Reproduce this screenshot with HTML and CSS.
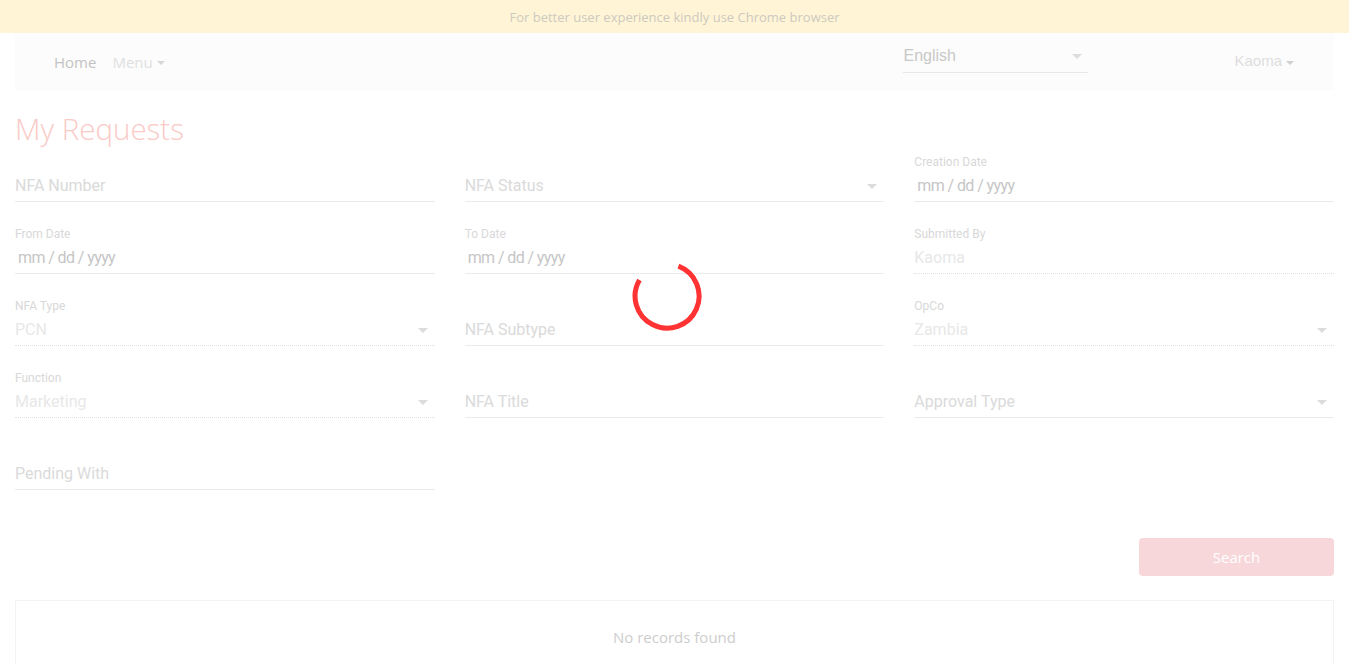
FILE: index.html
```html
<!DOCTYPE html>
<html lang="en">
<head>
<meta charset="utf-8">
<title>My Requests</title>
<link rel="stylesheet" href="styles.css">
</head>
<body>
<div class="page">
  <div class="banner">For better user experience kindly use Chrome browser</div>
  <nav class="navbar">
    <div class="nav-left">
      <span class="nav-home">Home</span>
      <span class="nav-menu">Menu<span class="caret"></span></span>
    </div>
    <div class="nav-right">
      <div class="lang">English<span class="tri"></span></div>
      <div class="user">Kaoma<span class="caret"></span></div>
    </div>
  </nav>
  <main class="content">
    <h1 class="title">My Requests</h1>
    <div class="form-grid">
      <div class="field"><div class="label"></div><div class="input ph">NFA Number</div></div>
      <div class="field"><div class="label"></div><div class="input ph select">NFA Status<span class="tri"></span></div></div>
      <div class="field"><div class="label">Creation Date</div><div class="input date">mm / dd / yyyy</div></div>

      <div class="field"><div class="label">From Date</div><div class="input date">mm / dd / yyyy</div></div>
      <div class="field"><div class="label">To Date</div><div class="input date">mm / dd / yyyy</div></div>
      <div class="field"><div class="label">Submitted By</div><div class="input disabled">Kaoma</div></div>

      <div class="field"><div class="label">NFA Type</div><div class="input disabled select">PCN<span class="tri"></span></div></div>
      <div class="field"><div class="label"></div><div class="input ph">NFA Subtype</div></div>
      <div class="field"><div class="label">OpCo</div><div class="input disabled select">Zambia<span class="tri"></span></div></div>

      <div class="field"><div class="label">Function</div><div class="input disabled select">Marketing<span class="tri"></span></div></div>
      <div class="field"><div class="label"></div><div class="input ph">NFA Title</div></div>
      <div class="field"><div class="label"></div><div class="input ph select">Approval Type<span class="tri"></span></div></div>

      <div class="field"><div class="label"></div><div class="input ph">Pending With</div></div>
    </div>
    <div class="actions"><button class="search-btn" type="button">Search</button></div>
    <div class="results">No records found</div>
  </main>
  <div class="spinner">
    <svg width="72" height="72" viewBox="0 0 72 72">
      <path d="M 48.4 4.2 A 32 32 0 1 1 9.5 17.9" fill="none" stroke="#ff3333" stroke-width="5"/>
    </svg>
  </div>
</div>
</body>
</html>
```
FILE: styles.css
```css
html, body {
  margin: 0;
  padding: 0;
  overflow: hidden;
  background: #ffffff;
}

.page {
  width: 1349px;
  height: 664px;
  position: relative;
  background: #ffffff;
}

.banner {
  height: 33px;
  line-height: 34px;
  background: #fff5d6;
  text-align: center;
  font-family: "Open Sans", sans-serif;
  font-size: 13px;
  color: #cdc9c0;
}

.navbar {
  margin: 0 15px;
  height: 57px;
  background: #fcfcfc;
  display: flex;
  justify-content: space-between;
  align-items: center;
  padding: 0 39px;
}

.nav-left {
  display: flex;
  align-items: center;
  gap: 16px;
  font-family: "Open Sans", sans-serif;
  font-size: 15px;
}

.nav-home {
  color: #c3c3c3;
}

.nav-menu {
  color: #e0e0e0;
  display: flex;
  align-items: center;
}

.caret {
  display: inline-block;
  width: 0;
  height: 0;
  margin-left: 4px;
  border-left: 4px solid transparent;
  border-right: 4px solid transparent;
  border-top: 4px solid #d6d6d6;
  position: relative;
  top: 1px;
}

.nav-right {
  display: flex;
  align-items: flex-start;
  align-self: stretch;
}

.lang {
  margin-top: 9px;
  width: 179px;
  height: 30px;
  line-height: 28px;
  border-bottom: 1px solid #e8e8e8;
  font-family: "Liberation Sans", Arial, sans-serif;
  font-size: 16px;
  color: #c8c8c8;
  display: flex;
  justify-content: space-between;
  align-items: flex-start;
  padding-right: 6px;
}

.lang .tri {
  margin-top: 12px;
}

.tri {
  display: inline-block;
  width: 0;
  height: 0;
  border-left: 5px solid transparent;
  border-right: 5px solid transparent;
  border-top: 5px solid #dcdcdc;
}

.user {
  margin-left: 146px;
  margin-top: 19px;
  font-family: "Liberation Sans", Arial, sans-serif;
  font-size: 15px;
  color: #dedede;
  display: flex;
  align-items: center;
  padding-right: 1px;
}

.user .caret {
  top: 2px;
  border-top-color: #d0d0d0;
}

.content {
  padding: 0 15px;
}

.title {
  margin: 19px 0 0 0;
  height: 41px;
  line-height: 40px;
  font-family: "Open Sans", sans-serif;
  font-weight: 300;
  font-size: 29.5px;
  color: #f9cac6;
}

.form-grid {
  display: grid;
  grid-template-columns: repeat(3, 1fr);
  column-gap: 30px;
  row-gap: 20px;
}

.field {
  padding-top: 5px;
  font-family: Roboto, "Liberation Sans", sans-serif;
}

.label {
  height: 14px;
  line-height: 14px;
  font-size: 12px;
  color: #d8d8d8;
}

.input {
  height: 32px;
  padding-top: 2px;
  box-sizing: border-box;
  height: 33px;
  line-height: 30px;
  font-size: 16px;
  border-bottom: 1px solid #ebebeb;
  display: flex;
  justify-content: space-between;
  align-items: center;
}

.input.ph {
  color: #dadada;
}

.input.date {
  color: #c6c6c6;
  padding-left: 3px;
  letter-spacing: -0.6px;
}

.input.disabled {
  color: #e8e8e8;
  border-bottom: 1px dotted #e0e0e0;
}

.input.select {
  padding-right: 7px;
}

.actions {
  margin-top: 48px;
  display: flex;
  justify-content: flex-end;
}

.search-btn {
  width: 195px;
  height: 38px;
  border: none;
  border-radius: 4px;
  background: #f8d7da;
  color: #ffffff;
  font-family: "Open Sans", sans-serif;
  font-size: 15px;
  padding: 0;
}

.results {
  margin-top: 24px;
  border: 1px solid #f3f3f3;
  padding: 25px 0 40px;
  line-height: 22px;
  text-align: center;
  font-family: "Open Sans", sans-serif;
  font-size: 15px;
  color: #cdcdcd;
}

.spinner {
  position: absolute;
  left: 630px;
  top: 262px;
  width: 72px;
  height: 72px;
}
```
